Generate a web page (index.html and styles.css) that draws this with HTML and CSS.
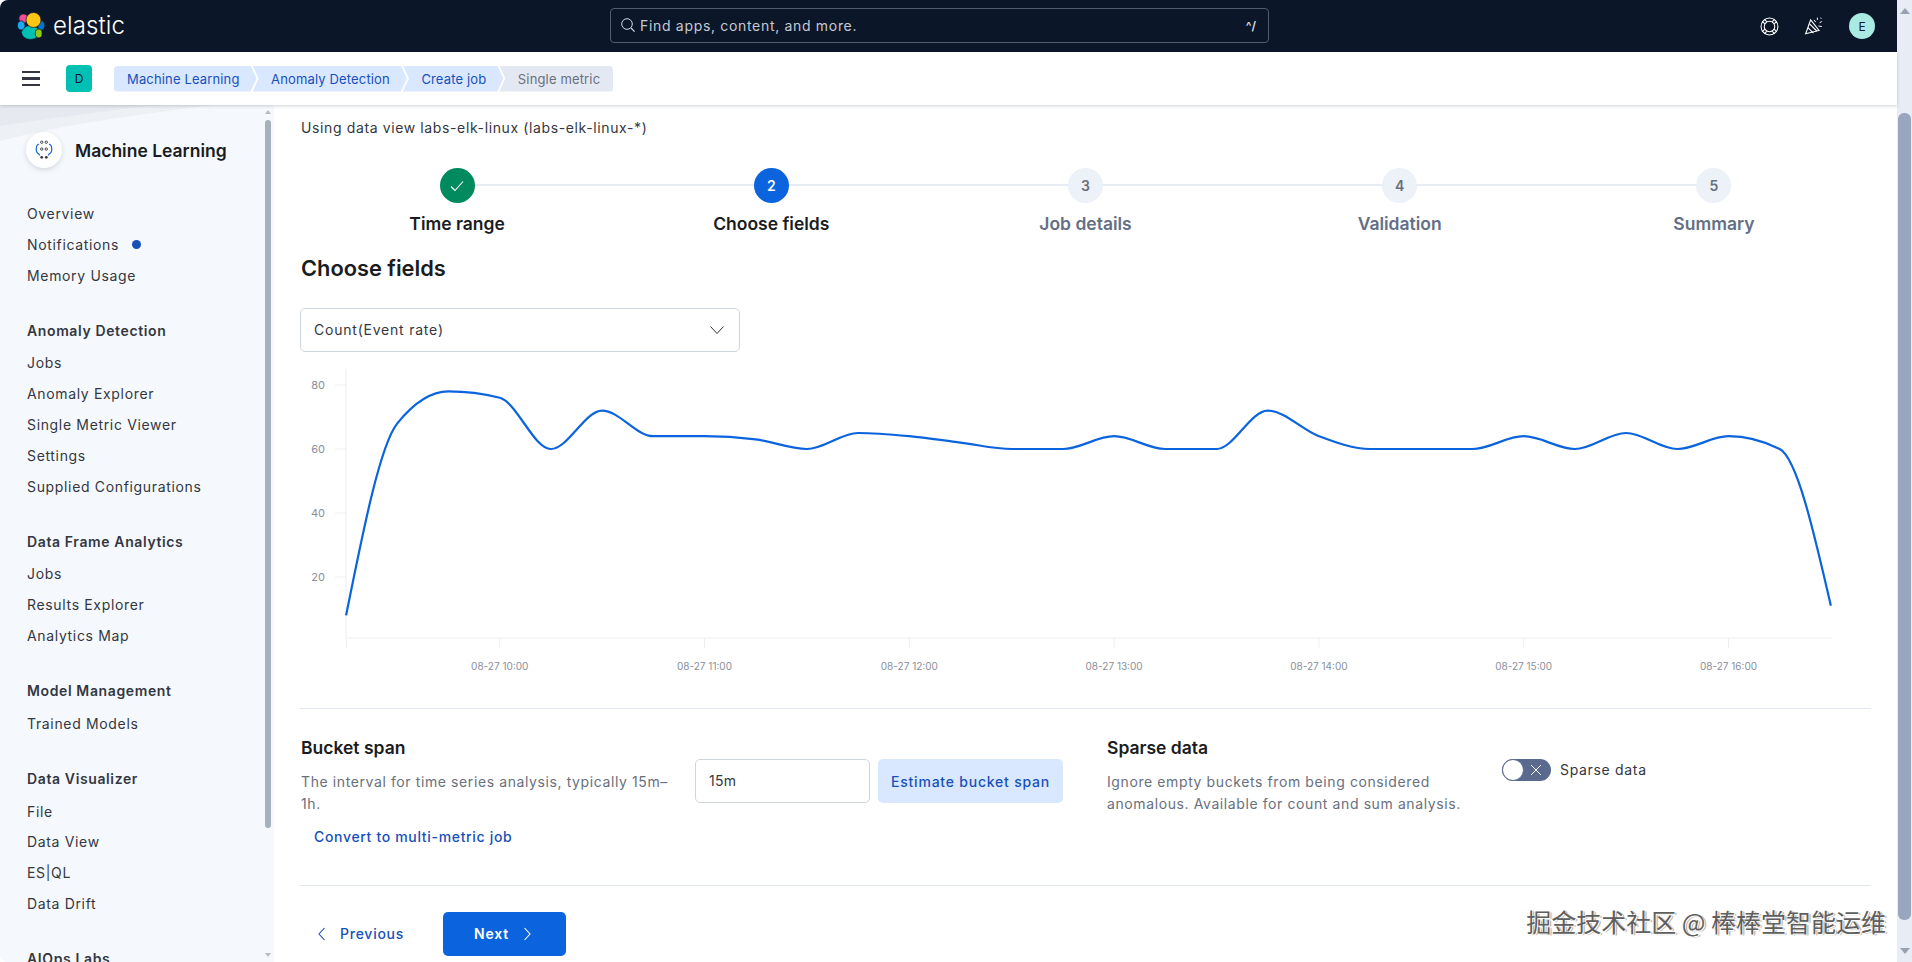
FILE: index.html
```html
<!DOCTYPE html>
<html lang="en">
<head>
<meta charset="utf-8">
<title>Create job - Machine Learning - Elastic</title>
<link rel="stylesheet" href="styles.css">
</head>
<body>
<div class="app">
  <div class="page">
    <header class="topbar">
      <div class="brand">
        <svg class="brand-logo" viewBox="0 0 28 28" width="28" height="28">
          <g stroke="#0b1628" stroke-width=".7">
            <ellipse cx="13.500" cy="20.500" rx="9" ry="7" fill="#00bfb3"/>
            <circle cx="6.500" cy="6.500" r="4.600" fill="#f04e98"/>
            <ellipse cx="4.200" cy="13.500" rx="3.800" ry="4.600" fill="#1ba9f5"/>
            <ellipse cx="24.200" cy="13.500" rx="3.600" ry="4.800" fill="#0077cc"/>
            <ellipse cx="21.700" cy="21.500" rx="3.400" ry="4.400" fill="#93c90e"/>
            <circle cx="16.500" cy="8" r="7.500" fill="#fec514"/>
          </g>
        </svg>
        <span class="brand-name">elastic</span>
      </div>
      <div class="search">
        <svg class="search-icon" viewBox="0 0 16 16" width="16" height="16"><circle cx="7" cy="7" r="5.300" fill="none" stroke="#d5dae3" stroke-width="1"/><path d="M11 11l3.600 3.600" stroke="#d5dae3" stroke-width="1.200"/></svg>
        <span class="search-text">Find apps, content, and more.</span>
        <span class="search-key">^/</span>
      </div>
      <div class="top-actions">
        <svg class="top-icon" viewBox="0 0 18 18" width="19" height="19" fill="none" stroke="#fff" stroke-width="1"><circle cx="9" cy="9" r="8"/><circle cx="9" cy="9" r="5"/><path d="M6.600 4.600L4 2M4.600 6.600L2 4M11.400 4.600L14 2M13.400 6.600L16 4M6.600 13.400L4 16M4.600 11.400L2 14M11.400 13.400L14 16M13.400 11.400L16 14" stroke-width="1"/></svg>
        <svg class="top-icon party" viewBox="0 0 18 18" width="20" height="20" fill="none" stroke="#fff" stroke-width="1"><path d="M1.500 16L6 3.500l7.500 9.500z"/><path d="M3.500 10.500l5 5M5 7l6.500 6.500"/><path d="M9 3.500l1.500 2M12 1.500v2M14 6l2-1M13 9l3 .5M15 1.500l.5 1" stroke-width=".9"/></svg>
        <span class="avatar">E</span>
      </div>
    </header>
    <nav class="crumbbar">
      <div class="burger"><span></span><span></span><span></span></div>
      <span class="space-badge">D</span>
      <div class="crumbs">
        <span class="crumb crumb-first">Machine Learning</span>
        <span class="crumb">Anomaly Detection</span>
        <span class="crumb">Create job</span>
        <span class="crumb crumb-last">Single metric</span>
      </div>
    </nav>
    <div class="body">
      <aside class="sidebar">
        <svg class="side-deco" viewBox="0 0 274 40" width="274" height="40" preserveAspectRatio="none"><path d="M0 0H215C150 8 70 18 0 36z" fill="#edf1f6"/><path d="M0 0H160C100 6 50 14 0 21z" fill="#e6eaf0"/></svg>
        <div class="side-scroll">
          <span class="arrow-up small"></span>
          <span class="side-thumb"></span>
          <span class="arrow-down small"></span>
        </div>
        <div class="side-head">
          <span class="side-logo">
            <svg viewBox="0 0 24 24" width="22" height="22" fill="none">
              <g fill="none" stroke="#343741" stroke-width="1"><circle cx="9.500" cy="3.500" r="1.300"/><circle cx="14.500" cy="3.500" r="1.300"/><circle cx="9.500" cy="11" r="1.300"/><circle cx="14.500" cy="11" r="1.300"/></g>
              <g fill="#343741"><circle cx="9.500" cy="20" r="1.500"/><circle cx="14.500" cy="20" r="1.500"/></g>
              <path d="M6.500 5.500C2.500 7 2.500 15 6.500 16.500l1 1.500M17.500 5.500c4 1.500 4 9.500 0 11l-1 1.500" stroke="#0b64dd" stroke-width="1.300"/>
            </svg>
          </span>
          <span class="side-title">Machine Learning</span>
        </div>
        <ul class="side-list first">
          <li>Overview</li>
          <li>Notifications<span class="dot"></span></li>
          <li>Memory Usage</li>
        </ul>
        <h4 class="side-group">Anomaly Detection</h4>
        <ul class="side-list">
          <li>Jobs</li>
          <li>Anomaly Explorer</li>
          <li>Single Metric Viewer</li>
          <li>Settings</li>
          <li>Supplied Configurations</li>
        </ul>
        <h4 class="side-group">Data Frame Analytics</h4>
        <ul class="side-list">
          <li>Jobs</li>
          <li>Results Explorer</li>
          <li>Analytics Map</li>
        </ul>
        <h4 class="side-group">Model Management</h4>
        <ul class="side-list">
          <li>Trained Models</li>
        </ul>
        <h4 class="side-group">Data Visualizer</h4>
        <ul class="side-list">
          <li>File</li>
          <li>Data View</li>
          <li>ES|QL</li>
          <li>Data Drift</li>
        </ul>
        <h4 class="side-group">AIOps Labs</h4>
      </aside>
      <main class="main">
        <p class="intro">Using data view labs-elk-linux (labs-elk-linux-*)</p>
        <ol class="steps">
          <li class="step done">
            <span class="step-num"><svg viewBox="0 0 16 16" width="16" height="16" fill="none"><path d="M2 8.500l4 4 8-9" stroke="#fff" stroke-width="1.100"/></svg></span>
            <span class="step-title">Time range</span>
          </li>
          <li class="step current"><span class="step-num">2</span><span class="step-title">Choose fields</span></li>
          <li class="step"><span class="step-num">3</span><span class="step-title">Job details</span></li>
          <li class="step"><span class="step-num">4</span><span class="step-title">Validation</span></li>
          <li class="step"><span class="step-num">5</span><span class="step-title">Summary</span></li>
        </ol>
        <h2 class="section-title">Choose fields</h2>
        <div class="select">
          <span>Count(Event rate)</span>
          <svg viewBox="0 0 16 16" width="16" height="16" fill="none"><path d="M1.500 4.500L8 11.500l6.500-7" stroke="#343741" stroke-width="1"/></svg>
        </div>
        <svg class="chart" viewBox="300 360 1571 330" width="1571" height="330">
          <g class="axis">
            <path d="M346 369V638H1832"/>
            <path d="M335 385H346M335 449H346M335 513H346M335 577H346"/>
            <path d="M346.500 638V648M499.700 638V648M704.500 638V648M909.300 638V648M1114.100 638V648M1318.900 638V648M1523.700 638V648M1728.500 638V648"/>
          </g>
          <g class="y-labels">
            <text x="325" y="389">80</text>
            <text x="325" y="453">60</text>
            <text x="325" y="517">40</text>
            <text x="325" y="581">20</text>
          </g>
          <g class="x-labels">
            <text x="499.700" y="670">08-27 10:00</text>
            <text x="704.500" y="670">08-27 11:00</text>
            <text x="909.300" y="670">08-27 12:00</text>
            <text x="1114.100" y="670">08-27 13:00</text>
            <text x="1318.900" y="670">08-27 14:00</text>
            <text x="1523.700" y="670">08-27 15:00</text>
            <text x="1728.500" y="670">08-27 16:00</text>
          </g>
          <path class="line" d="M346.100 615.400C363.200 530.100 380.200 444.700 397.300 423.400C414.400 402.100 431.400 391.400 448.500 391.400C465.600 391.400 482.600 393.500 499.700 397.800C516.800 402.100 533.800 449 550.900 449C568 449 585 410.600 602.100 410.600C619.200 410.600 636.200 436.200 653.300 436.200C670.400 436.200 687.400 436.200 704.500 436.200C721.600 436.200 738.600 437.300 755.700 439.400C772.800 441.500 789.800 449 806.900 449C824 449 841 433 858.100 433C875.200 433 892.200 434.600 909.300 436.200C926.400 437.800 943.400 440.500 960.500 442.600C977.600 444.700 994.600 449 1011.700 449C1028.800 449 1045.800 449 1062.900 449C1080 449 1097 436.200 1114.100 436.200C1131.200 436.200 1148.200 449 1165.300 449C1182.400 449 1199.400 449 1216.500 449C1233.600 449 1250.600 410.600 1267.700 410.600C1284.800 410.600 1301.800 429.800 1318.900 436.200C1336 442.600 1353 449 1370.100 449C1387.200 449 1404.200 449 1421.300 449C1438.400 449 1455.400 449 1472.500 449C1489.600 449 1506.600 436.200 1523.700 436.200C1540.800 436.200 1557.800 449 1574.900 449C1592 449 1609 433 1626.100 433C1643.200 433 1660.200 449 1677.300 449C1694.400 449 1711.400 436.200 1728.500 436.200C1745.600 436.200 1762.600 440.500 1779.700 449C1796.800 457.500 1813.800 531.600 1830.900 605.800"/>
        </svg>
        <hr class="rule">
        <section class="settings">
          <div class="col-bucket">
            <h3>Bucket span</h3>
            <p>The interval for time series analysis, typically 15m–1h.</p>
            <a class="link">Convert to multi-metric job</a>
          </div>
          <div class="col-controls">
            <span class="input">15m</span>
            <span class="btn-soft">Estimate bucket span</span>
          </div>
          <div class="col-sparse">
            <h3>Sparse data</h3>
            <p>Ignore empty buckets from being considered anomalous. Available for count and sum analysis.</p>
          </div>
          <div class="col-toggle">
            <span class="switch">
              <span class="knob"></span>
              <svg viewBox="0 0 12 12" width="12" height="12" fill="none"><path d="M1 1l10 10M11 1L1 11" stroke="#fff" stroke-width="1"/></svg>
            </span>
            <span class="toggle-label">Sparse data</span>
          </div>
        </section>
        <hr class="rule">
        <div class="nav-buttons">
          <span class="btn-prev">
            <svg viewBox="0 0 16 16" width="16" height="16" fill="none"><path d="M10.500 2L5 8l5.500 6" stroke="#1750ba" stroke-width="1.100"/></svg>
            Previous
          </span>
          <span class="btn-next">
            Next
            <svg viewBox="0 0 16 16" width="16" height="16" fill="none"><path d="M5.500 2L11 8l-5.500 6" stroke="#fff" stroke-width="1.100"/></svg>
          </span>
        </div>
        <div class="watermark">掘金技术社区 @ 棒棒堂智能运维</div>
      </main>
    </div>
  </div>
  <div class="page-scroll">
    <span class="arrow-up"></span>
    <span class="page-thumb"></span>
    <span class="arrow-down"></span>
  </div>
</div>
</body>
</html>
```
FILE: styles.css
```css
* { box-sizing: border-box; }
html, body { margin: 0; height: 100%; background: #fff; }
body { font-family: Inter, "Noto Sans", sans-serif; font-size: 14px; color: #343741; overflow: hidden; }
h2, h3, h4, p, ul, ol { margin: 0; padding: 0; list-style: none; }

.app { display: flex; height: 962px; width: 1912px; border-radius: 8px 0 0 8px; overflow: hidden; }
.page { flex: 1; min-width: 0; display: flex; flex-direction: column; }

/* top bar */
.topbar { height: 52px; flex: none; background: #0b1628; display: flex; align-items: center; position: relative; }
.brand { display: flex; align-items: center; padding-left: 17px; width: 610px; }
.brand-logo { flex: none; }
.brand-name { margin-left: 8px; color: #fff; font-size: 24px; font-weight: 300; letter-spacing: .1px; line-height: 28px; }
.search { width: 659px; height: 35px; border: 1px solid #535c6b; border-radius: 4px; display: flex; align-items: center; padding: 0 12px 1px 9px; color: #c5cad3; margin-top: -1px; }
.search-icon { flex: none; }
.search-text { margin-left: 4px; flex: 1; font-size: 14px; letter-spacing: .68px; }
.search-key { font-size: 12px; font-weight: 600; color: #d5dae3; }
.top-actions { margin-left: auto; display: flex; align-items: center; padding-right: 22px; }
.top-icon { flex: none; }
.top-icon.party { margin-left: 25px; }
.avatar { margin-left: 25px; width: 26px; height: 26px; border-radius: 50%; background: #a9eae2; color: #0b1628; font-size: 12px; display: flex; align-items: center; justify-content: center; }

/* breadcrumb bar */
.crumbbar { height: 53px; flex: none; background: #fff; display: flex; align-items: center; position: relative; z-index: 2; box-shadow: 0 1px 3px rgba(60, 70, 90, .25); }
.burger { margin-left: 22px; width: 18px; display: flex; flex-direction: column; gap: 4px; }
.burger span { display: block; height: 2.500px; background: #343741; }
.space-badge { margin-left: 26px; width: 26px; height: 27px; border-radius: 4px; background: #00bfb3; color: #0b1628; font-size: 12px; display: flex; align-items: center; justify-content: center; }
.crumbs { margin-left: 22px; display: flex; height: 26px; }
.crumb { height: 26px; display: flex; align-items: center; padding: 0 17px 0 18.500px; margin-left: -4px; background: #d9e8ff; color: #1750ba; font-size: 13px; letter-spacing: .15px; clip-path: polygon(0 0, calc(100% - 6px) 0, 100% 50%, calc(100% - 6px) 100%, 0 100%, 6px 50%); }
.crumb-first { margin-left: 0; padding-left: 13px; border-radius: 4px 0 0 4px; clip-path: polygon(0 0, calc(100% - 6px) 0, 100% 50%, calc(100% - 6px) 100%, 0 100%); }
.crumb-last { background: #e3e8f2; color: #69707d; padding-right: 13px; border-radius: 0 4px 4px 0; clip-path: polygon(0 0, 100% 0, 100% 100%, 0 100%, 6px 50%); }

/* body */
.body { flex: 1; min-height: 0; display: flex; }
.sidebar { width: 274px; flex: none; background: #f5f9fd; position: relative; overflow: hidden; padding-left: 27px; box-shadow: 1px 0 2px rgba(60, 70, 90, .08); }
.side-deco { position: absolute; left: 0; top: 0; }
.side-scroll { position: absolute; right: 3px; top: 0; bottom: 0; width: 6px; }
.side-thumb { position: absolute; left: 0; right: 0; top: 15px; height: 708px; background: #a7b0bd; border-radius: 3px; }
.arrow-up, .arrow-down { position: absolute; left: 50%; margin-left: -5px; width: 0; height: 0; border-left: 5px solid transparent; border-right: 5px solid transparent; }
.arrow-up { top: 8px; border-bottom: 6px solid #98a2b3; }
.arrow-down { bottom: 8px; border-top: 6px solid #98a2b3; }
.arrow-up.small { top: 5px; margin-left: -3px; border-left-width: 3px; border-right-width: 3px; border-bottom: 4px solid #b4bcc8; }
.arrow-down.small { bottom: 5px; margin-left: -3px; border-left-width: 3px; border-right-width: 3px; border-top: 4px solid #b4bcc8; }

.side-head { position: relative; display: flex; align-items: center; margin-top: 27px; height: 36px; margin-left: -1px; }
.side-logo { width: 36px; height: 36px; border-radius: 50%; background: #fff; box-shadow: 0 2px 5px rgba(60, 70, 90, .18); display: flex; align-items: center; justify-content: center; flex: none; }
.side-title { margin-left: 13px; font-size: 17.500px; font-weight: 600; color: #1a1c21; white-space: nowrap; }
.side-list li { height: 30.800px; padding-top: 1px; line-height: 30.800px; font-size: 14px; letter-spacing: .66px; color: #343741; white-space: nowrap; position: relative; }
.side-list.first { margin-top: 30px; }
.side-group { margin-top: 24.400px; height: 32.600px; line-height: 31px; font-size: 14px; font-weight: 600; letter-spacing: .62px; color: #343741; white-space: nowrap; }
.dot { position: absolute; left: 105px; top: 11px; width: 9px; height: 9px; border-radius: 50%; background: #1750ba; }

/* main */
.main { flex: 1; min-width: 0; background: #fff; padding: 13px 26px 0; position: relative; overflow: hidden; }
.intro { line-height: 20px; letter-spacing: .62px; color: #343741; padding-left: 1px; }
.steps { display: grid; grid-template-columns: repeat(5, 1fr); margin-top: 30px; position: relative; }
.steps::before { content: ""; position: absolute; left: 157px; right: 157px; top: 16px; height: 2px; background: #e6ebf4; }
.step { display: flex; flex-direction: column; align-items: center; position: relative; }
.step-num { width: 35px; height: 35px; border-radius: 50%; background: #edf1f8; color: #69707d; font-size: 14px; font-weight: 600; display: flex; align-items: center; justify-content: center; }
.step-title { margin-top: 9px; line-height: 24px; font-size: 17.500px; font-weight: 600; color: #646f85; }
.done .step-num { background: #008a5e; }
.current .step-num { background: #0b64dd; color: #fff; }
.done .step-title, .current .step-title { color: #1a1c21; }
.section-title { margin-top: 17px; line-height: 30px; font-size: 21.800px; font-weight: 600; color: #1a1c21; padding-left: 1px; }
.select { margin-top: 25px; width: 440px; height: 44px; border: 1px solid #cfd5df; border-radius: 5px; display: flex; align-items: center; justify-content: space-between; padding: 0 14px 1px 13px; letter-spacing: .78px; color: #343741; }
.chart { display: block; margin-top: 8px; }
.axis path { fill: none; stroke: #eceef2; stroke-width: 1; }
.y-labels text { font-family: Inter, sans-serif; font-size: 11px; fill: #8a8f99; text-anchor: end; }
.x-labels text { font-family: Inter, sans-serif; font-size: 10px; fill: #8a8f99; text-anchor: middle; }
.line { fill: none; stroke: #0b64dd; stroke-width: 2.200; stroke-linejoin: round; }
.rule { border: 0; height: 1px; margin: 18px 0 0; background: #e3e8f0; }

.settings { display: flex; padding-top: 27px; height: 176px; }
.settings + .rule { margin-top: 0; }
.settings h3 { line-height: 24px; font-size: 17.500px; font-weight: 600; color: #1a1c21; }
.settings p { margin-top: 11px; line-height: 22px; letter-spacing: .6px; color: #69707d; }
.col-bucket { width: 394px; flex: none; padding-left: 1px; }
.col-bucket p { width: 372px; }
.link { display: block; margin-top: 11px; padding-left: 13px; line-height: 22px; font-weight: 500; letter-spacing: .67px; color: #1750ba; }
.col-controls { width: 413px; flex: none; display: flex; gap: 8px; align-items: flex-start; margin-top: 23px; margin-left: 1px; }
.input { width: 175px; height: 44px; border: 1px solid #cfd5df; border-radius: 5px; display: flex; align-items: center; padding: 0 0 1px 13px; letter-spacing: .3px; color: #343741; }
.btn-soft { width: 185px; height: 44px; border-radius: 5px; background: #d9e8ff; color: #1750ba; font-weight: 500; letter-spacing: .78px; display: flex; align-items: center; justify-content: center; }
.col-sparse { width: 395px; flex: none; margin-left: -1px; }
.col-sparse p { width: 370px; }
.col-toggle { display: flex; align-items: center; gap: 9px; height: 22px; margin-top: 23px; letter-spacing: .68px; color: #343741; }
.toggle-label { padding-bottom: 2px; }
.switch { width: 49px; height: 22px; border-radius: 11px; background: #5a6a8e; position: relative; display: flex; align-items: center; justify-content: flex-end; padding-right: 9px; }
.knob { position: absolute; left: 0; top: 0; width: 22px; height: 22px; border-radius: 50%; background: #fff; border: 1px solid #5a6a8e; }

.nav-buttons { display: flex; align-items: center; margin-top: 26px; }
.btn-prev { width: 143px; height: 44px; padding: 0 0 2px 14px; display: flex; align-items: center; gap: 10px; color: #1750ba; font-weight: 500; letter-spacing: .75px; }
.btn-prev svg { margin-top: 2px; }
.btn-next { width: 123px; height: 44px; border-radius: 5px; background: #0b64dd; color: #fff; font-weight: 600; letter-spacing: .8px; display: flex; align-items: center; justify-content: center; gap: 10px; padding-bottom: 1px; }

.watermark { position: absolute; right: 11px; bottom: 26px; font-family: "Noto Sans CJK SC", sans-serif; font-size: 25px; line-height: 30px; color: #5f5f5f; text-shadow: 1px 1px 0 #fff, 2px 1px 1px #999; white-space: nowrap; }

/* page scrollbar */
.page-scroll { width: 15px; flex: none; background: #e8ecf4; position: relative; }
.page-thumb { position: absolute; left: 1px; right: 1px; top: 113px; height: 807px; background: #98a6c0; border-radius: 6px; }
```
